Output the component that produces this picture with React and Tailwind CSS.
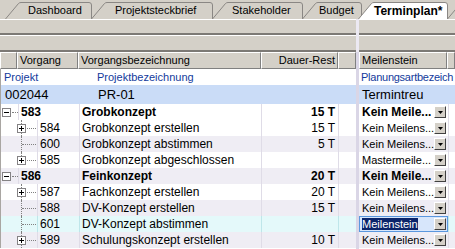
import React from "react";

const tabs = [
  { label: "Dashboard", w: 88, cls: "w-[88px] ml-[5px] pl-[23px]" },
  { label: "Projektsteckbrief", w: 123, cls: "w-[123px] ml-[-2px] pl-[24px]" },
  { label: "Stakeholder", w: 92, cls: "w-[92px] ml-[-2px] pl-[20px]" },
  { label: "Budget", w: 61, cls: "w-[61px] ml-[-2px] pl-[17px]" },
  { label: "Terminplan*", w: 91, cls: "w-[91px] ml-[-5px] pl-[16px]", active: true },
  { label: "", w: 24, cls: "w-[24px] ml-[-2px]" },
];

const rows = [
  { id: "583", name: "Grobkonzept", dauer: "15 T", ms: "Kein Meile...", level: 1, bold: true },
  { id: "584", name: "Grobkonzept erstellen", dauer: "15 T", ms: "Kein Meilens...", tree: "first" },
  { id: "600", name: "Grobkonzept abstimmen", dauer: "5 T", ms: "Kein Meilens...", tree: "leaf", alt: true },
  { id: "585", name: "Grobkonzept abgeschlossen", dauer: "", ms: "Mastermeile...", tree: "last" },
  { id: "586", name: "Feinkonzept", dauer: "20 T", ms: "Kein Meile...", level: 1, bold: true, alt: true },
  { id: "587", name: "Fachkonzept erstellen", dauer: "20 T", ms: "Kein Meilens...", tree: "first" },
  { id: "588", name: "DV-Konzept erstellen", dauer: "15 T", ms: "Kein Meilens...", tree: "leaf", alt: true },
  { id: "601", name: "DV-Konzept abstimmen", dauer: "", ms: "Meilenstein", tree: "leaf", sel: true },
  { id: "589", name: "Schulungskonzept erstellen", dauer: "10 T", ms: "Kein Meilens...", tree: "mid", alt: true },
];

function Tab({ t }) {
  const W = t.w;
  const d = `M0.5,17 L13.5,1.5 Q14.5,0.5 16,0.5 L${W - 4},0.5 Q${W - 1.5},0.5 ${W - 1.5},3 L${W - 1.5},17`;
  return (
    <div className={`relative h-[17px] shrink-0 flex items-center ${t.cls} ${t.active ? "z-10" : ""}`}>
      <svg className="absolute left-0 top-0" width={W} height="17">
        <path d={d} fill={t.active ? "#ffffff" : "#d4d0c8"} stroke="#8a8784" strokeWidth="1" />
      </svg>
      <span className={`relative leading-none ${t.active ? "font-bold text-[12px]" : "text-[11px]"} text-black`}>{t.label}</span>
    </div>
  );
}

function Box({ plus }) {
  return (
    <svg width="9" height="9" className="block">
      <rect x="0.5" y="0.5" width="8" height="8" fill="#fff" stroke="#848284" />
      <line x1="2" y1="4.5" x2="7" y2="4.5" stroke="#000" />
      {plus && <line x1="4.5" y1="2" x2="4.5" y2="7" stroke="#000" />}
    </svg>
  );
}

function Gutter({ r }) {
  if (r.level === 1) {
    return (
      <div className="relative w-[18px] h-full shrink-0 border-l border-[#a9a6a2]">
        <div className="absolute left-[1px] top-[4px]"><Box /></div>
        <div className="absolute left-[11px] top-[8px] w-[6px] border-t border-dotted border-[#808080]" />
      </div>
    );
  }
  const t = r.tree;
  return (
    <div className="relative w-[37px] h-full shrink-0 border-l border-[#a9a6a2]">
      {t === "leaf" ? (
        <>
          <div className="absolute left-[20px] top-0 bottom-0 border-l border-dotted border-[#808080]" />
          <div className="absolute left-[21px] top-[8px] w-[14px] border-t border-dotted border-[#808080]" />
        </>
      ) : (
        <>
          <div className="absolute left-[20px] top-0 h-[4px] border-l border-dotted border-[#808080]" />
          {t !== "last" && <div className="absolute left-[20px] top-[13px] bottom-0 border-l border-dotted border-[#808080]" />}
          <div className="absolute left-[16px] top-[4px]"><Box plus /></div>
          <div className="absolute left-[26px] top-[8px] w-[9px] border-t border-dotted border-[#808080]" />
        </>
      )}
    </div>
  );
}

function DropBtn() {
  return (
    <div className="w-[12px] h-[12px] shrink-0 bg-[#d4d0c8] border-t border-l border-t-white border-l-white border-b border-r border-b-[#404040] border-r-[#404040] flex items-center justify-center">
      <svg width="5" height="3"><path d="M0,0 L5,0 L2.5,3 Z" fill="#000" /></svg>
    </div>
  );
}

const hdr = "h-full flex items-center bg-[#d4d0c8] border-t border-l border-t-white border-l-white border-r border-b border-r-[#808080] border-b-[#808080] text-[11px] px-[2px] overflow-hidden whitespace-nowrap";
const grid = "border-[#dfdce7]";

export default function App() {
  return (
    <div className="w-[455px] h-[249px] overflow-hidden bg-[#d4d0c8] font-['Liberation_Sans',Arial,sans-serif] text-black select-none">
      <div className="h-[19px] flex items-end overflow-hidden">
        {tabs.map((t, i) => (
          <Tab key={i} t={t} />
        ))}
      </div>

      <div className="flex h-[230px]">
        {/* left pane */}
        <div className="w-[356px] shrink-0 flex flex-col">
          <div className="h-4 shrink-0 border-t border-white border-b-2 border-b-[#7c7975]" />
          <div className="h-[17px] shrink-0 border-t border-white border-b-2 border-b-[#7c7975]" />
          <div className="h-[17px] shrink-0 flex">
            <div className={`${hdr} w-[17px]`} />
            <div className={`${hdr} w-[61px]`}>Vorgang</div>
            <div className={`${hdr} w-[183px]`}>Vorgangsbezeichnung</div>
            <div className={`${hdr} w-[77px] justify-end`}>Dauer-Rest</div>
            <div className={`${hdr} flex-1`} />
          </div>
          <div className="flex-1 bg-white">
            <div className="h-4 flex items-center text-[11px] text-[#133a9c] bg-white border-l border-[#a9a6a2]">
              <span className="w-[96px] pl-[3px]">Projekt</span>
              <span>Projektbezeichnung</span>
            </div>
            <div className="h-[19px] flex items-center text-[13px] bg-[#cadcf7] border-l border-[#a9a6a2]">
              <span className="w-[97px] pl-[4px]">002044</span>
              <span>PR-01</span>
            </div>
            {rows.map((r) => {
              const bg = r.sel ? "bg-[#e4f9fa]" : r.alt ? "bg-[#efedf4]" : "bg-white";
              const g = r.sel ? "border-[#bfe6ea]" : grid;
              const tx = r.bold ? "font-bold text-[12px]" : "text-[12px]";
              return (
                <div key={r.id} className={`h-4 flex ${bg}`}>
                  <div className="w-[79px] h-full flex shrink-0">
                    <Gutter r={r} />
                    <div className={`flex-1 h-full flex items-center border-l ${g} pl-[2px] ${tx}`}>{r.id}</div>
                  </div>
                  <div className={`w-[182px] h-full flex items-center border-l ${g} pl-[2px] ${tx} whitespace-nowrap`}>{r.name}</div>
                  <div className={`w-[77px] h-full flex items-center justify-end border-l ${g} pr-[3px] ${tx}`}>{r.dauer}</div>
                  <div className={`flex-1 h-full border-l ${g}`} />
                </div>
              );
            })}
          </div>
        </div>

        {/* splitter */}
        <div className="w-[3px] shrink-0 flex flex-col">
          <div className="h-[33px] bg-[#ece9f3]" />
          <div className="flex-1 bg-[#dad6e6]" />
        </div>

        {/* right pane */}
        <div className="flex-1 flex flex-col min-w-0">
          <div className="h-4 shrink-0 border-t border-white border-b-2 border-b-[#7c7975]" />
          <div className="h-[17px] shrink-0 border-t border-white border-b-2 border-b-[#7c7975]" />
          <div className="h-[17px] shrink-0 flex">
            <div className={`${hdr} w-[88px]`}>Meilenstein</div>
            <div className={`${hdr} flex-1`} />
          </div>
          <div className="flex-1 bg-white">
            <div className="h-4 flex items-center text-[11px] tracking-[-0.25px] text-[#133a9c] pl-[2px] whitespace-nowrap">
              Planungsartbezeich
            </div>
            <div className="h-[19px] flex items-center text-[13px] bg-[#cadcf7] pl-[3px]">Termintreu</div>
            {rows.map((r) => {
              const bg = r.sel ? "bg-[#e4f9fa]" : r.alt ? "bg-[#efedf4]" : "bg-white";
              const g = r.sel ? "border-[#bfe6ea]" : grid;
              const tx = r.bold ? "font-bold text-[12px]" : "text-[11px]";
              return (
                <div key={r.id} className={`h-4 flex ${bg}`}>
                  {r.sel ? (
                    <div className="w-[89px] h-full flex items-center border border-[#5a97de] bg-[#d7e6fb] pl-[2px] pr-[1px]">
                      <div className="flex-1 min-w-0 text-[11px]">
                        <span className="bg-[#0a246a] text-white">{r.ms}</span>
                      </div>
                      <DropBtn />
                    </div>
                  ) : (
                    <div className="w-[89px] h-full flex items-center pl-[3px] pr-[2px]">
                      <div className={`flex-1 min-w-0 whitespace-nowrap overflow-hidden ${tx}`}>{r.ms}</div>
                      <DropBtn />
                    </div>
                  )}
                  <div className={`flex-1 h-full border-l ${g}`} />
                </div>
              );
            })}
          </div>
        </div>
      </div>
    </div>
  );
}
